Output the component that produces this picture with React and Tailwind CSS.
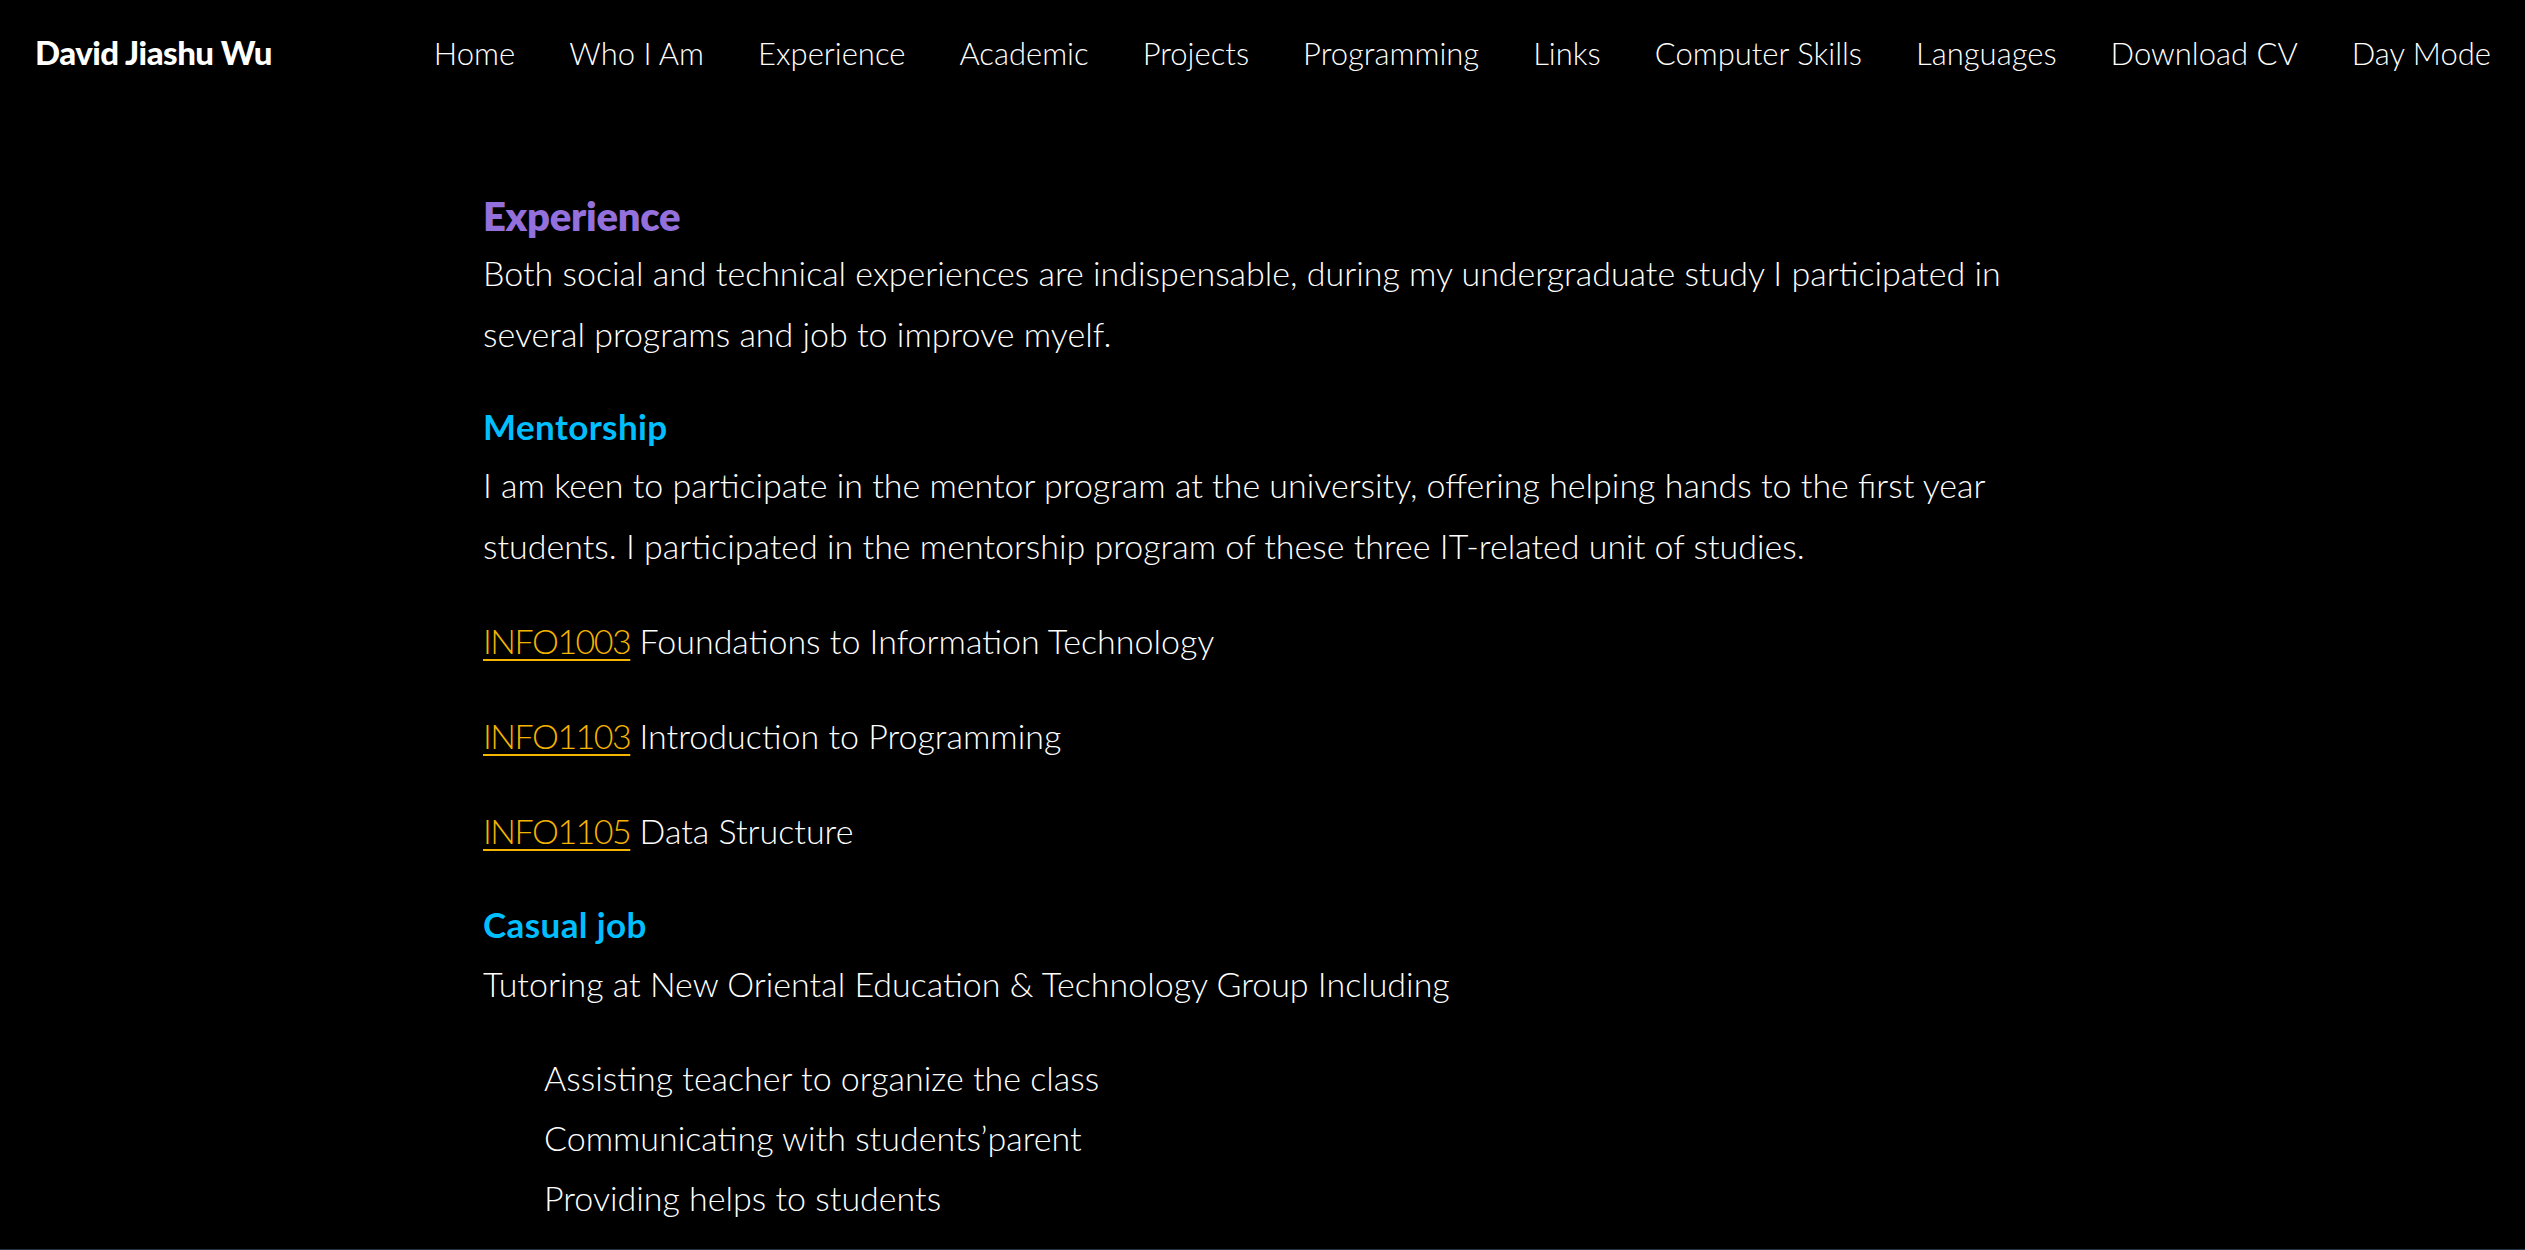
import React from "react";

const navItems = [
  "Home",
  "Who I Am",
  "Experience",
  "Academic",
  "Projects",
  "Programming",
  "Links",
  "Computer Skills",
  "Languages",
  "Download CV",
  "Day Mode",
];

function CourseLine({ code, title }) {
  return (
    <p className="mb-[34px] leading-[61px]">
      <a
        href="#"
        className="text-[#f5b400] tracking-[-1.5px] underline decoration-[2px] underline-offset-[5px]"
      >
        {code}
      </a>{" "}
      {title}
    </p>
  );
}

export default function App() {
  return (
    <div className="min-h-[1250px] bg-black text-white font-['Lato','Liberation_Sans',sans-serif] flex flex-col">
      <header className="h-[106px] flex items-center justify-between pl-[35px] pr-[34px]">
        <div className="text-[33px] font-black tracking-[-0.5px]">David Jiashu Wu</div>
        <nav className="flex items-center gap-[54px] text-[31px] font-light">
          {navItems.map((n) => (
            <a key={n} href="#" className="whitespace-nowrap">
              {n}
            </a>
          ))}
        </nav>
      </header>

      <main className="w-[1559px] mx-auto pt-[84px] flex-1 text-[34px] font-light">
        <h2 className="text-[40px] leading-[52px] font-extrabold text-[#9370db] tracking-[-0.3px]">
          Experience
        </h2>
        <p className="mb-[34px] leading-[61px]">
          Both social and technical experiences are indispensable, during my undergraduate study I
          participated in several programs and job to improve myelf.
        </p>

        <h3 className="text-[35px] leading-[56px] font-bold text-[#00bfff] tracking-[0.4px]">
          Mentorship
        </h3>
        <p className="mb-[34px] leading-[61px]">
          I am keen to participate in the mentor program at the university, offering helping hands to
          the first year students. I participated in the mentorship program of these three IT-related
          unit of studies.
        </p>

        <CourseLine code="INFO1003" title="Foundations to Information Technology" />
        <CourseLine code="INFO1103" title="Introduction to Programming" />
        <CourseLine code="INFO1105" title="Data Structure" />

        <h3 className="text-[35px] leading-[58px] font-bold text-[#00bfff] tracking-[0.4px]">
          Casual job
        </h3>
        <p className="mb-[34px] leading-[61px]">
          Tutoring at New Oriental Education &amp; Technology Group Including
        </p>
        <ul className="pl-[61px] leading-[60px]">
          <li>Assisting teacher to organize the class</li>
          <li>Communicating with students’parent</li>
          <li>Providing helps to students</li>
        </ul>
      </main>
      <div className="h-[1px] bg-[#1e3644]" />
    </div>
  );
}
